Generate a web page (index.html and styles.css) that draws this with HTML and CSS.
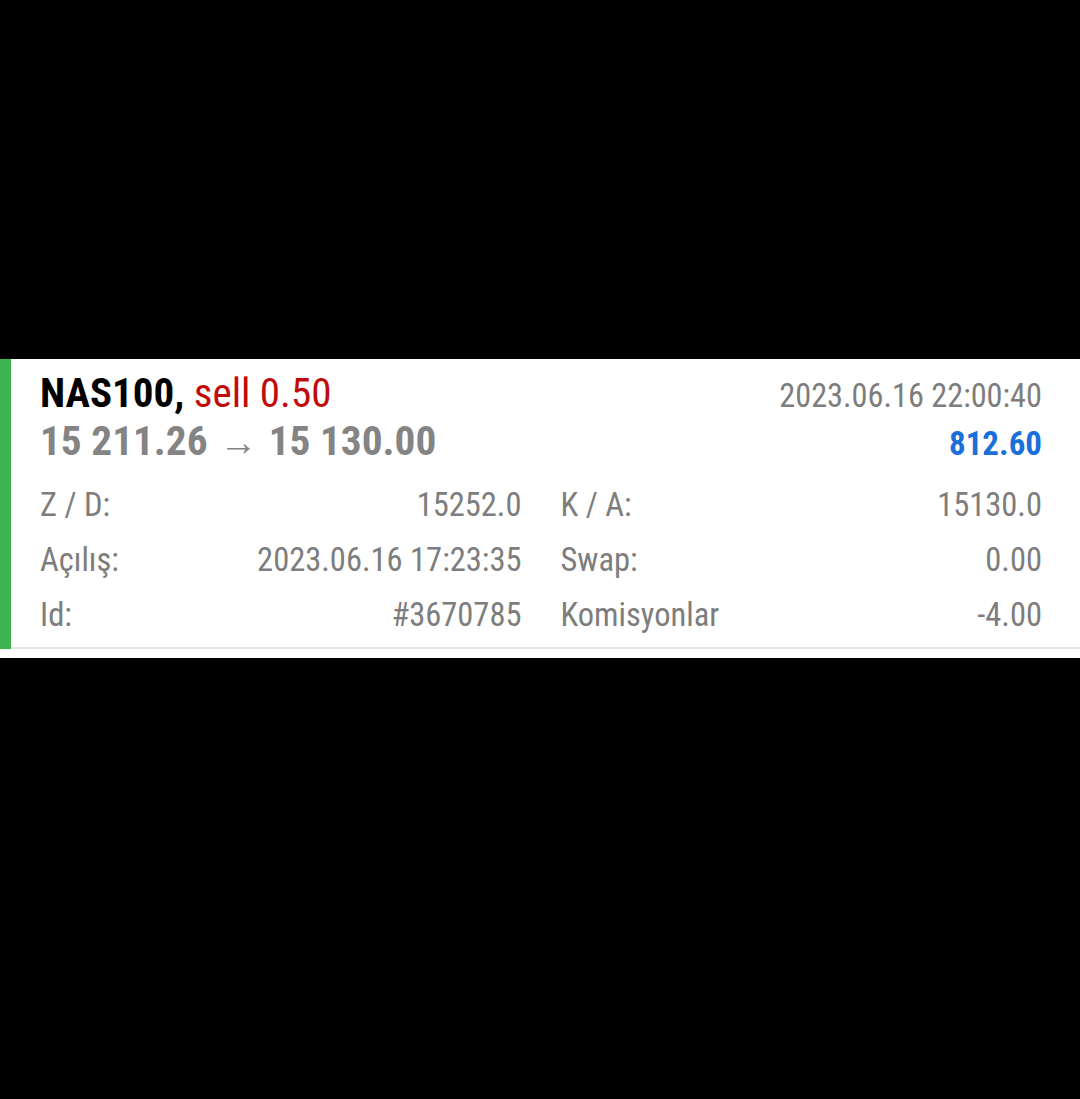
FILE: index.html
```html
<!DOCTYPE html>
<html>
<head>
  <meta charset="utf-8">
  <title>Geçmiş</title>
  <link rel="stylesheet" href="styles.css">
</head>
<body>
  <div class="screen">
    <div class="history-list">
      <div class="deal">
        <div class="deal-head">
          <div class="deal-title">NAS100, <span class="sell">sell 0.50</span></div>
          <div class="deal-time">2023.06.16 22:00:40</div>
          <div class="deal-prices">15 211.26 <span class="arrow">→</span> 15 130.00</div>
          <div class="deal-profit">812.60</div>
        </div>

        <div class="deal-details">
          <div class="detail">
            <span class="detail-label">Z / D:</span>
            <span class="detail-value">15252.0</span>
          </div>
          <div class="detail">
            <span class="detail-label">K / A:</span>
            <span class="detail-value">15130.0</span>
          </div>
          <div class="detail">
            <span class="detail-label">Açılış:</span>
            <span class="detail-value">2023.06.16 17:23:35</span>
          </div>
          <div class="detail">
            <span class="detail-label">Swap:</span>
            <span class="detail-value">0.00</span>
          </div>
          <div class="detail">
            <span class="detail-label">Id:</span>
            <span class="detail-value">#3670785</span>
          </div>
          <div class="detail">
            <span class="detail-label">Komisyonlar</span>
            <span class="detail-value">-4.00</span>
          </div>
        </div>
      </div>
    </div>
  </div>
</body>
</html>
```
FILE: styles.css
```css
body {
  margin: 0;
  background: #000;
  font-family: "Roboto Condensed", Roboto, sans-serif;
  font-stretch: condensed;
}

.screen {
  padding-top: 359px;
}

.history-list {
  background: #fff;
  padding-bottom: 9px;
}

.deal {
  border-left: 11px solid #3cb54e;
  padding: 12px 38px 6px 29px;
  box-shadow: inset 0 -2px 0 #e6e6e6;
}

.deal-head {
  display: grid;
  grid-template-columns: 1fr auto;
  align-items: baseline;
  line-height: 45px;
}

.deal-title {
  font-size: 41px;
  font-weight: 700;
  color: #000;
}

.sell {
  font-weight: 400;
  color: #c10b0b;
}

.deal-time {
  font-size: 32.3px;
  color: #7d7d7d;
  text-align: right;
}

.deal-prices {
  font-size: 41.3px;
  font-weight: 700;
  color: #848484;
}

.arrow {
  font-size: 38px;
  margin: 0 2px;
}

.deal-profit {
  font-size: 33px;
  font-weight: 700;
  color: #1a6fdb;
  text-align: right;
}

.deal-details {
  display: grid;
  grid-template-columns: 1fr 1fr;
  column-gap: 39px;
  margin-top: 12px;
}

.detail {
  display: flex;
  justify-content: space-between;
  font-size: 32.5px;
  line-height: 55px;
  color: #7d7d7d;
}
```
